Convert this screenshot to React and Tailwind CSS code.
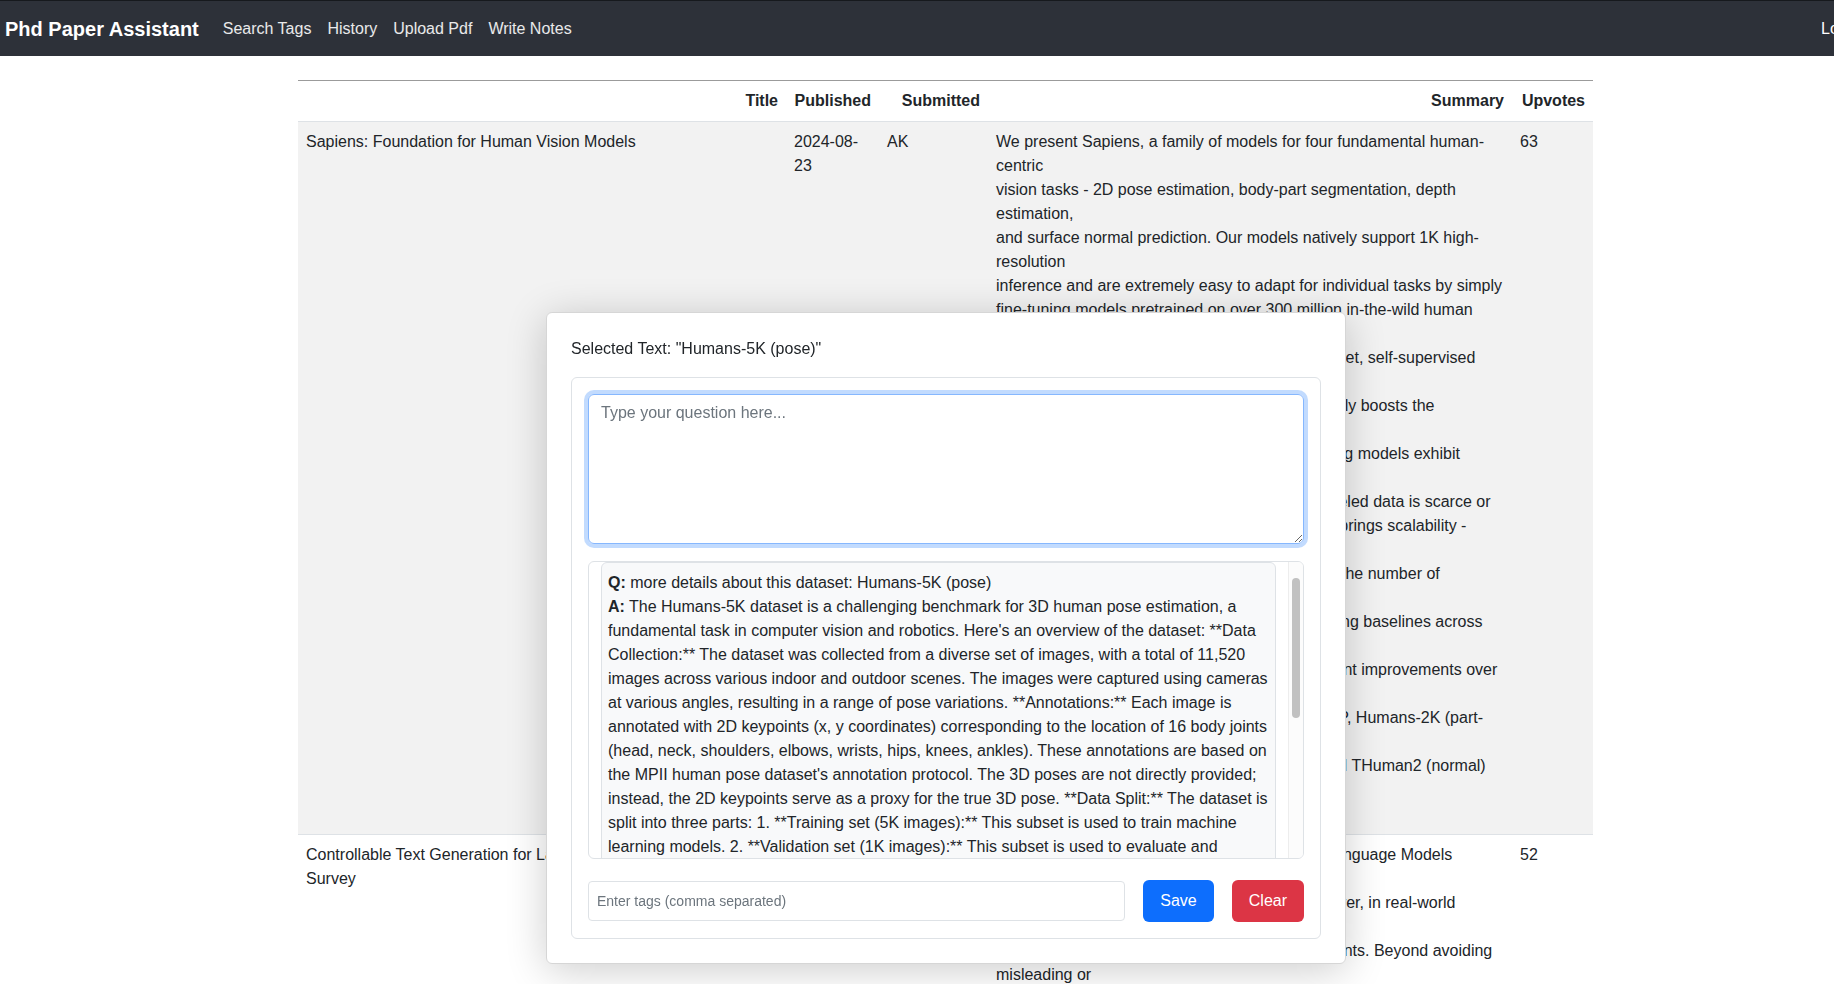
import React from "react";

const NAV_LINKS = ["Search Tags", "History", "Upload Pdf", "Write Notes"];

const SAPIENS_SUMMARY = `We present Sapiens, a family of models for four fundamental human-centric
vision tasks - 2D pose estimation, body-part segmentation, depth estimation,
and surface normal prediction. Our models natively support 1K high-resolution
inference and are extremely easy to adapt for individual tasks by simply
fine-tuning models pretrained on over 300 million in-the-wild human images. We
observe that, given the same computational budget, self-supervised pretraining
on a curated dataset of human images significantly boosts the performance for
a diverse set of human-centric tasks. The resulting models exhibit remarkable
generalization to in-the-wild data, even when labeled data is scarce or
entirely synthetic. Our simple model design also brings scalability - model
performance across tasks improves as we scale the number of parameters from 0.3
to 2 billion. Sapiens consistently surpasses existing baselines across various
human-centric benchmarks. We achieve significant improvements over the prior
state-of-the-art on Humans-5K (pose) by 7.6 mAP, Humans-2K (part-seg) by 17.1
mIoU, Hi4D (depth) by 22.4% relative RMSE, and THuman2 (normal) by 53.5%
relative angular error.`;

const CTG_SUMMARY = `In Natural Language Processing (NLP), Large Language Models (LLMs) have
demonstrated high text generation quality. However, in real-world applications,
LLMs must meet increasingly complex requirements. Beyond avoiding misleading or
inappropriate content, LLMs are also expected to cater to specific user needs,
such as imitating particular writing styles or generating text with poetic
richness. These varied demands have driven the development of Controllable Text
Generation (CTG) techniques, which ensure that outputs adhere to predefined
control conditions--such as safety, sentiment, thematic consistency, and
linguistic style--while maintaining high standards of helpfulness, fluency, and
diversity.`;

const PAPERS = [
  {
    title: "Sapiens: Foundation for Human Vision Models",
    published: "2024-08-23",
    submitted: "AK",
    summary: SAPIENS_SUMMARY,
    upvotes: 63,
  },
  {
    title: "Controllable Text Generation for Large Language Models: A Survey",
    published: "2024-08-22",
    submitted: "AK",
    summary: CTG_SUMMARY,
    upvotes: 52,
  },
];

const ANSWER =
  "The Humans-5K dataset is a challenging benchmark for 3D human pose estimation, a fundamental task in computer vision and robotics. Here's an overview of the dataset: **Data Collection:** The dataset was collected from a diverse set of images, with a total of 11,520 images across various indoor and outdoor scenes. The images were captured using cameras at various angles, resulting in a range of pose variations. **Annotations:** Each image is annotated with 2D keypoints (x, y coordinates) corresponding to the location of 16 body joints (head, neck, shoulders, elbows, wrists, hips, knees, ankles). These annotations are based on the MPII human pose dataset's annotation protocol. The 3D poses are not directly provided; instead, the 2D keypoints serve as a proxy for the true 3D pose. **Data Split:** The dataset is split into three parts: 1. **Training set (5K images):** This subset is used to train machine learning models. 2. **Validation set (1K images):** This subset is used to evaluate and optimize the performance of models during training. 3. **Testing set (5.52K images):** This subset is used to evaluate the final performance of models and compare them with other state-of-the-art methods. **Evaluation Metrics:** The performance of models on the Humans-5K dataset is typically evaluated using metrics such as Mean Per Joint Position Error (MPJPE), Procrustes Aligned MPJPE (PA-MPJPE), and Percentage of Correct Keypoints (PCK). **Challenges:** The Humans-5K dataset presents several challenges, including occlusions, self-occlusions, varying lighting conditions, complex backgrounds and a wide diversity of body shapes, clothing and poses.";

const Navbar = () => (
  <nav className="flex h-14 items-center overflow-hidden border-t border-[#16191d] bg-[#2d3139] pl-[5px]">
    <span className="mr-4 text-xl font-bold text-white">Phd Paper Assistant</span>
    {NAV_LINKS.map((link) => (
      <a key={link} href="#" className="px-2 text-base text-white/90">
        {link}
      </a>
    ))}
    <button className="-mr-[36px] ml-auto text-base text-white">Logout</button>
  </nav>
);

const PaperTable = () => (
  <table className="w-[1295px] table-fixed border-collapse border-t border-[#9b9b9b] text-base leading-6">
    <colgroup>
      <col className="w-[488px]" />
      <col className="w-[93px]" />
      <col className="w-[109px]" />
      <col className="w-[524px]" />
      <col className="w-[81px]" />
    </colgroup>
    <thead>
      <tr className="border-b border-[#dee2e6]">
        {["Title", "Published", "Submitted", "Summary", "Upvotes"].map((h) => (
          <th key={h} className="p-2 text-right font-bold">
            {h}
          </th>
        ))}
      </tr>
    </thead>
    <tbody>
      {PAPERS.map((paper, i) => (
        <tr
          key={paper.title}
          className={`border-b border-[#dee2e6] align-top ${i % 2 === 0 ? "bg-[#f2f2f2]" : "bg-white"}`}
        >
          <td className="p-2">{paper.title}</td>
          <td className="p-2">{paper.published}</td>
          <td className="p-2">{paper.submitted}</td>
          <td className="whitespace-pre-line p-2">{paper.summary}</td>
          <td className="p-2">{paper.upvotes}</td>
        </tr>
      ))}
    </tbody>
  </table>
);

const AskModal = () => (
  <div className="fixed left-[546px] top-[312px] w-[800px] rounded-md border border-[#d6d6d6] bg-white p-6 shadow-[0_6px_40px_rgba(0,0,0,0.2)]">
    <p className="mb-4 leading-6">Selected Text: "Humans-5K (pose)"</p>

    <div className="rounded-md border border-[#dee2e6] p-4">
      {/* Question box */}
      <textarea
        autoFocus
        placeholder="Type your question here..."
        className="block h-[150px] w-full resize-y rounded-md border border-[#86b7fe] px-3 py-1.5 text-base leading-6 shadow-[0_0_0_4px_rgba(13,110,253,0.25)] outline-none placeholder:text-[#6c757d]"
      />

      {/* History, with its scroll bar */}
      <div className="mt-[17px] flex h-[298px] overflow-hidden rounded-md border border-[#dee2e6]">
        <div className="min-w-0 flex-1 overflow-hidden px-3">
          <div className="rounded-md border border-[#dee2e6] bg-[#f8f9fa] px-[6px] py-2 leading-6">
            <strong>Q:</strong> more details about this dataset: Humans-5K (pose)
            <br />
            <strong>A:</strong> {ANSWER}
          </div>
        </div>
        <div className="w-[15px] shrink-0 border-l border-[#ededed] bg-[#fcfcfc] pt-4">
          <div className="mx-auto h-[140px] w-2 rounded-full bg-[#c1c1c1]" />
        </div>
      </div>

      {/* Tags */}
      <div className="mt-[21px] flex items-center gap-[18px]">
        <input
          placeholder="Enter tags (comma separated)"
          className="h-10 min-w-0 flex-1 rounded border border-[#dee2e6] px-2 text-sm outline-none placeholder:text-[#6c757d]"
        />
        <button className="h-[42px] rounded-md bg-[#0d6efd] px-[17px] text-base text-white">Save</button>
        <button className="h-[42px] rounded-md bg-[#dc3545] px-[17px] text-base text-white">Clear</button>
      </div>
    </div>
  </div>
);

export default function App() {
  return (
    <div className="h-screen overflow-hidden bg-white font-['Liberation_Sans',Arial,sans-serif] text-[#212529]">
      <Navbar />
      <main className="pl-[298px] pt-6">
        <PaperTable />
      </main>
      <AskModal />
    </div>
  );
}
